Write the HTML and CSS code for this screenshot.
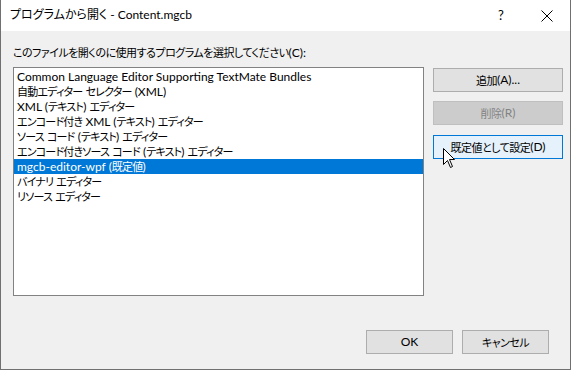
FILE: index.html
```html
<!DOCTYPE html>
<html lang="ja">
<head>
<meta charset="utf-8">
<title>プログラムから開く</title>
<link rel="stylesheet" href="styles.css">
</head>
<body>
<div class="window">
  <div class="titlebar">
    <span class="title">プログラムから開く - Content.mgcb</span>
    <span class="tb-btn help">?</span>
    <span class="tb-btn close">
      <svg width="12" height="12" viewBox="0 0 12 12"><path d="M0.5 0.5 L11.5 11.5 M11.5 0.5 L0.5 11.5" stroke="#000" stroke-width="1" fill="none"/></svg>
    </span>
  </div>
  <div class="content">
    <div class="label"><span class="j">このファイルを開くのに使用するプログラムを選択してください</span>(C):</div>
    <div class="main">
      <div class="list">
        <div class="item">Common Language Editor Supporting TextMate Bundles</div>
        <div class="item"><span class="j">自動エディター</span> <span class="j">セレクター</span> (XML)</div>
        <div class="item">XML (<span class="j">テキスト</span>) <span class="j">エディター</span></div>
        <div class="item"><span class="j">エンコード付き</span> XML (<span class="j">テキスト</span>) <span class="j">エディター</span></div>
        <div class="item"><span class="j">ソース</span> <span class="j">コード</span> (<span class="j">テキスト</span>) <span class="j">エディター</span></div>
        <div class="item"><span class="j">エンコード付きソース</span> <span class="j">コード</span> (<span class="j">テキスト</span>) <span class="j">エディター</span></div>
        <div class="item selected">mgcb-editor-wpf (<span class="j">既定値</span>)</div>
        <div class="item"><span class="j">バイナリ</span> <span class="j">エディター</span></div>
        <div class="item"><span class="j">リソース</span> <span class="j">エディター</span></div>
      </div>
      <div class="side">
        <div class="btn"><span class="j">追加</span>(A)...</div>
        <div class="btn disabled"><span class="j">削除</span>(R)</div>
        <div class="btn focused"><span class="j">既定値として設定</span>(D)
          <svg class="cursor" width="13" height="20" viewBox="0 0 13 20"><path d="M0.5 0.5 L0.5 16.5 L4.5 12.5 L7.5 19.5 L9.5 18.5 L6.5 11.5 L11.5 11.5 Z" fill="#fff" stroke="#000" stroke-width="1" stroke-linejoin="miter"/></svg>
        </div>
      </div>
    </div>
    <div class="footer">
      <div class="btn small">OK</div>
      <div class="btn small"><span class="j">キャンセル</span></div>
    </div>
  </div>
</div>
</body>
</html>
```

FILE: styles.css
```css
* { box-sizing: border-box; }
html, body { margin: 0; padding: 0; }
body {
  width: 571px;
  height: 370px;
  overflow: hidden;
  font-family: "Lato", "Noto Sans CJK JP", sans-serif;
  font-feature-settings: "palt";
  font-size: 12px;
  color: #000;
  background: #3a3a3a;
}
.j {
  font-family: "Noto Sans CJK JP", sans-serif;
  font-size: 11px;
  letter-spacing: -0.5px;
}
.item .j {
  letter-spacing: -0.8px;
}
.window {
  width: 571px;
  height: 370px;
  border: 1px solid #707070;
  border-top: none;
  display: flex;
  flex-direction: column;
  background: #f0f0f0;
}
.titlebar {
  height: 31px;
  background: #fff;
  display: flex;
  align-items: center;
  flex-shrink: 0;
}
.title {
  padding-left: 9px;
  flex: 1;
  line-height: 16px;
  margin-top: -1px;
}
.tb-btn {
  display: flex;
  align-items: center;
  justify-content: center;
  height: 31px;
}
.help {
  width: 46px;
  font-size: 13px;
  margin-top: -2px;
}
.close {
  width: 46px;
}
.content {
  flex: 1;
  padding: 13px 7px 0 12px;
  display: flex;
  flex-direction: column;
}
.label {
  line-height: 16px;
  height: 16px;
  white-space: nowrap;
}
.main {
  display: flex;
  margin-top: 7px;
  gap: 9px;
  height: 229px;
  flex-shrink: 0;
}
.list {
  width: 411px;
  height: 229px;
  flex-shrink: 0;
  background: #fff;
  border: 1px solid #828282;
  padding-top: 1px;
}
.item {
  height: 15px;
  line-height: 15px;
  padding-left: 3px;
  white-space: nowrap;
  overflow: hidden;
}
.item.selected {
  background: #0078d7;
  color: #fff;
}
.side {
  display: flex;
  flex-direction: column;
  width: 130px;
  flex-shrink: 0;
  padding-top: 1px;
}
.btn {
  position: relative;
  height: 24px;
  flex-shrink: 0;
  background: #e1e1e1;
  border: 1px solid #adadad;
  display: flex;
  align-items: center;
  justify-content: center;
  white-space: nowrap;
  line-height: 16px;
}
.side .btn + .btn { margin-top: 9px; }
.side .btn.focused { margin-top: 10px; }
.btn.disabled {
  background: #cccccc;
  border-color: #bfbfbf;
  color: #838383;
}
.btn.focused {
  background: #e5f1fb;
  border-color: #0078d7;
}
.cursor {
  position: absolute;
  left: 9px;
  top: 12px;
}
.footer {
  display: flex;
  justify-content: flex-end;
  gap: 9px;
  margin-top: 34px;
  margin-right: 14px;
}
.btn.small {
  width: 87px;
}
```
